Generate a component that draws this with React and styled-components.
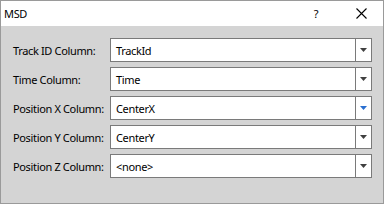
import React from "react";
import styled, { createGlobalStyle } from "styled-components";

const Global = createGlobalStyle`
  html, body { margin: 0; padding: 0; background: #ffffff; }
  body { font-family: "Noto Sans", "DejaVu Sans", sans-serif; font-size: 11px; letter-spacing: -0.35px; }
`;

const Window = styled.div`
  box-sizing: border-box;
  width: 384px;
  height: 204px;
  border: 1px solid #9a9a9a;
  display: flex;
  flex-direction: column;
  background: #d4d4d4;
`;

const TitleBar = styled.div`
  height: 25px;
  background: #ffffff;
  display: flex;
  align-items: center;
  padding-left: 3px;
`;

const Title = styled.div`
  flex: 1;
  color: #000;
`;

const TitleButton = styled.div`
  width: ${(p) => p.w}px;
  height: 25px;
  display: flex;
  align-items: center;
  justify-content: center;
  color: #000;
`;

const Body = styled.div`
  flex: 1;
  padding: 12px 11px 0 11px;
  display: flex;
  flex-direction: column;
  gap: 5px;
`;

const Row = styled.div`
  display: flex;
  align-items: center;
  height: 24px;
`;

const Label = styled.div`
  width: 97px;
  padding-left: 1px;
  color: #000;
  white-space: nowrap;
`;

const Combo = styled.div`
  box-sizing: border-box;
  flex: 1;
  height: 24px;
  border: 1px solid #7a7a7a;
  background: #ffffff;
  display: flex;
`;

const ComboText = styled.div`
  flex: 1;
  padding-left: 5px;
  display: flex;
  align-items: center;
  color: #000;
`;

const ArrowBtn = styled.div`
  width: 15px;
  border-left: 1px solid #7a7a7a;
  display: flex;
  align-items: center;
  justify-content: center;
`;

const Arrow = ({ color }) => (
  <svg width="7" height="4" viewBox="0 0 7 4">
    <path d="M0 0H7L3.5 4Z" fill={color} />
  </svg>
);

const rows = [
  ["Track ID Column:", "TrackId"],
  ["Time Column:", "Time"],
  ["Position X Column:", "CenterX", true],
  ["Position Y Column:", "CenterY"],
  ["Position Z Column:", "<none>"],
];

export default function App() {
  return (
    <>
      <Global />
      <Window>
        <TitleBar>
          <Title>MSD</Title>
          <TitleButton w={46}>?</TitleButton>
          <TitleButton w={44}>
            <svg width="11" height="11" viewBox="0 0 11 11">
              <path d="M0.5 0.5L10.5 10.5M10.5 0.5L0.5 10.5" stroke="#000" strokeWidth="1.1" />
            </svg>
          </TitleButton>
        </TitleBar>
        <Body>
          {rows.map(([l, v, hot]) => (
            <Row key={l}>
              <Label>{l}</Label>
              <Combo>
                <ComboText>{v}</ComboText>
                <ArrowBtn>
                  <Arrow color={hot ? "#2a6fd0" : "#404040"} />
                </ArrowBtn>
              </Combo>
            </Row>
          ))}
        </Body>
      </Window>
    </>
  );
}
